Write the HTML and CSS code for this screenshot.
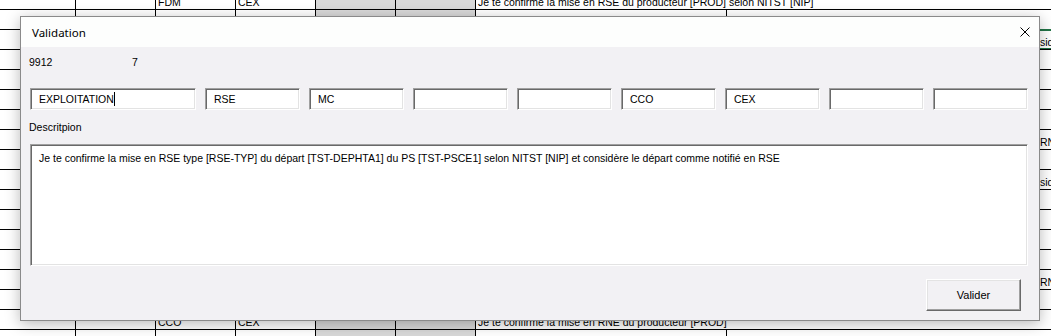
FILE: index.html
```html
<!DOCTYPE html>
<html lang="fr">
<head>
  <meta charset="UTF-8">
  <meta name="viewport" content="width=device-width, initial-scale=1">
  <title>Validation</title>
  <link rel="stylesheet" href="styles.css">
</head>
<body>

  <!-- feuille Excel en arriere-plan -->
  <div class="sheet">
    <div class="row">
      <div class="cell c0"></div><div class="cell c1"></div>
      <div class="cell c2">FDM</div><div class="cell c3">CEX</div>
      <div class="cell c4 grey"></div><div class="cell c5 grey"></div>
      <div class="cell c6 spill">Je te confirme la mise en RSE du producteur [PROD] selon NITST [NIP]</div>
      <div class="cell c7"></div><div class="cell c8"></div>
    </div>
    <div class="row">
      <div class="cell c0"></div><div class="cell c1"></div>
      <div class="cell c2">CEX</div><div class="cell c3">CCO</div>
      <div class="cell c4 grey"></div><div class="cell c5 grey"></div>
      <div class="cell c6"></div><div class="cell c7"></div><div class="cell c8"></div>
    </div>
    <div class="row">
      <div class="cell c0"></div><div class="cell c1"></div><div class="cell c2"></div><div class="cell c3"></div>
      <div class="cell c4 grey"></div><div class="cell c5 grey"></div>
      <div class="cell c6"></div><div class="cell c7"></div><div class="cell c8 selected">sidère le départ</div>
    </div>
    <div class="row">
      <div class="cell c0"></div><div class="cell c1"></div><div class="cell c2"></div><div class="cell c3"></div>
      <div class="cell c4 grey"></div><div class="cell c5 grey"></div>
      <div class="cell c6"></div><div class="cell c7"></div><div class="cell c8"></div>
    </div>
    <div class="row">
      <div class="cell c0"></div><div class="cell c1"></div><div class="cell c2"></div><div class="cell c3"></div>
      <div class="cell c4 grey"></div><div class="cell c5 grey"></div>
      <div class="cell c6"></div><div class="cell c7"></div><div class="cell c8"></div>
    </div>
    <div class="row">
      <div class="cell c0"></div><div class="cell c1"></div><div class="cell c2"></div><div class="cell c3"></div>
      <div class="cell c4 grey"></div><div class="cell c5 grey"></div>
      <div class="cell c6"></div><div class="cell c7"></div><div class="cell c8"></div>
    </div>
    <div class="row">
      <div class="cell c0"></div><div class="cell c1"></div><div class="cell c2"></div><div class="cell c3"></div>
      <div class="cell c4 grey"></div><div class="cell c5 grey"></div>
      <div class="cell c6"></div><div class="cell c7"></div><div class="cell c8"></div>
    </div>
    <div class="row">
      <div class="cell c0"></div><div class="cell c1"></div><div class="cell c2"></div><div class="cell c3"></div>
      <div class="cell c4 grey"></div><div class="cell c5 grey"></div>
      <div class="cell c6"></div><div class="cell c7"></div><div class="cell c8">RNE]</div>
    </div>
    <div class="row">
      <div class="cell c0"></div><div class="cell c1"></div><div class="cell c2"></div><div class="cell c3"></div>
      <div class="cell c4 grey"></div><div class="cell c5 grey"></div>
      <div class="cell c6"></div><div class="cell c7"></div><div class="cell c8"></div>
    </div>
    <div class="row">
      <div class="cell c0"></div><div class="cell c1"></div><div class="cell c2"></div><div class="cell c3"></div>
      <div class="cell c4 grey"></div><div class="cell c5 grey"></div>
      <div class="cell c6"></div><div class="cell c7"></div><div class="cell c8">sidère le départ</div>
    </div>
    <div class="row">
      <div class="cell c0"></div><div class="cell c1"></div><div class="cell c2"></div><div class="cell c3"></div>
      <div class="cell c4 grey"></div><div class="cell c5 grey"></div>
      <div class="cell c6"></div><div class="cell c7"></div><div class="cell c8"></div>
    </div>
    <div class="row">
      <div class="cell c0"></div><div class="cell c1"></div><div class="cell c2"></div><div class="cell c3"></div>
      <div class="cell c4 grey"></div><div class="cell c5 grey"></div>
      <div class="cell c6"></div><div class="cell c7"></div><div class="cell c8"></div>
    </div>
    <div class="row">
      <div class="cell c0"></div><div class="cell c1"></div><div class="cell c2"></div><div class="cell c3"></div>
      <div class="cell c4 grey"></div><div class="cell c5 grey"></div>
      <div class="cell c6"></div><div class="cell c7"></div><div class="cell c8"></div>
    </div>
    <div class="row">
      <div class="cell c0"></div><div class="cell c1"></div><div class="cell c2"></div><div class="cell c3"></div>
      <div class="cell c4 grey"></div><div class="cell c5 grey"></div>
      <div class="cell c6"></div><div class="cell c7"></div><div class="cell c8"></div>
    </div>
    <div class="row">
      <div class="cell c0"></div><div class="cell c1"></div><div class="cell c2"></div><div class="cell c3"></div>
      <div class="cell c4 grey"></div><div class="cell c5 grey"></div>
      <div class="cell c6"></div><div class="cell c7"></div><div class="cell c8">RNE]</div>
    </div>
    <div class="row">
      <div class="cell c0"></div><div class="cell c1"></div><div class="cell c2"></div><div class="cell c3"></div>
      <div class="cell c4 grey"></div><div class="cell c5 grey"></div>
      <div class="cell c6"></div><div class="cell c7"></div><div class="cell c8"></div>
    </div>
    <div class="row">
      <div class="cell c0"></div><div class="cell c1"></div>
      <div class="cell c2">CCO</div><div class="cell c3">CEX</div>
      <div class="cell c4 grey"></div><div class="cell c5 grey"></div>
      <div class="cell c6 spill">Je te confirme la mise en RNE du producteur [PROD]</div>
      <div class="cell c7"></div><div class="cell c8"></div>
    </div>
    <div class="row">
      <div class="cell c0"></div><div class="cell c1"></div><div class="cell c2"></div><div class="cell c3"></div>
      <div class="cell c4 grey"></div><div class="cell c5 grey"></div>
      <div class="cell c6"></div><div class="cell c7"></div><div class="cell c8"></div>
    </div>
  </div>

  <!-- UserForm -->
  <div class="dialog">
    <div class="titlebar">
      <span class="title">Validation</span>
      <button class="close-btn">
        <svg width="10" height="10" viewBox="0 0 10 10" fill="none" stroke="#000" stroke-width="1">
          <path d="M0.5 0.5 L9.5 9.5" />
          <path d="M9.5 0.5 L0.5 9.5" />
        </svg>
      </button>
    </div>

    <div class="form-body">
      <div class="ids">
        <span class="id-label">9912</span>
        <span class="id-label">7</span>
      </div>

      <div class="fields">
        <div class="field wide">EXPLOITATION<span class="caret"></span></div>
        <div class="field">RSE</div>
        <div class="field">MC</div>
        <div class="field"></div>
        <div class="field"></div>
        <div class="field">CCO</div>
        <div class="field">CEX</div>
        <div class="field"></div>
        <div class="field"></div>
      </div>

      <div class="desc-label">Descritpion</div>

      <div class="field memo">Je te confirme la mise en RSE type [RSE-TYP] du départ [TST-DEPHTA1] du PS [TST-PSCE1] selon NITST [NIP] et considère le départ comme notifié en RSE</div>

      <div class="actions">
        <button class="btn">Valider</button>
      </div>
    </div>
  </div>

</body>
</html>
```

FILE: styles.css
```css
body {
  margin: 0;
  padding: 0;
  background: #fff;
  font-family: "Liberation Sans", Arial, sans-serif;
  overflow: hidden;
}

/* ---- feuille ---- */
.sheet {
  margin-top: -10px;
  font-size: 10.5px;
  color: #000;
}

.row {
  display: flex;
  height: 20px;
}

.cell {
  flex: 0 0 auto;
  box-sizing: border-box;
  height: 20px;
  border-right: 1px solid #000;
  border-bottom: 1px solid #000;
  background: #fff;
  padding: 0 2px;
  display: flex;
  align-items: flex-end;
  line-height: 14px;
  white-space: nowrap;
}

.c0 { width: 76px; }
.c1, .c2, .c3, .c4, .c5 { width: 80px; }
.c6 { width: 251px; }
.c7 { width: 312px; border-right: none; }
.c8 { flex: 1 1 auto; border-right: none; padding-left: 1px; overflow: hidden; }

.grey { background: #d9d9d9; }

.spill {
  border-right: none;
  overflow: visible;
  position: relative;
  z-index: 1;
  background: transparent;
}

.selected {
  box-shadow: inset 0 1px 0 #217346, 0 -1px 0 #217346, inset 0 -1px 0 #217346, 0 1px 0 #217346;
}

/* ---- dialogue ---- */
.dialog {
  position: absolute;
  left: 20px;
  top: 16px;
  width: 1020px;
  height: 305px;
  box-sizing: border-box;
  border: 1px solid #8a8a8a;
  background: #f2f1f4;
  box-shadow: 0 3px 14px rgba(0, 0, 0, 0.28);
  z-index: 5;
  display: flex;
  flex-direction: column;
}

.titlebar {
  height: 30px;
  background: #fdfefd;
  display: flex;
  align-items: center;
  justify-content: space-between;
  padding: 0 9px 0 11px;
}

.title {
  font-family: "Noto Sans", sans-serif;
  font-size: 11.5px;
  color: #000;
}

.close-btn {
  border: none;
  background: none;
  padding: 0;
  width: 10px;
  height: 10px;
  display: flex;
}

.form-body {
  padding: 0 11px 0 9px;
  font-size: 10.5px;
  color: #000;
}

.ids {
  display: flex;
  margin-top: 8px;
  height: 14px;
  line-height: 14px;
}

.id-label {
  width: 104px;
  margin-left: -1px;
}

.fields {
  display: flex;
  gap: 9px;
  margin-top: 19px;
}

.field {
  box-sizing: border-box;
  width: 95px;
  height: 22px;
  background: #fff;
  border: 1px solid;
  border-color: #a0a0a0 #fff #fff #a0a0a0;
  box-shadow: inset 1px 1px 0 #696969, inset -1px -1px 0 #e3e3e3;
  padding: 0 8px;
  line-height: 20px;
  white-space: nowrap;
  overflow: hidden;
}

.field.wide {
  width: 166px;
}

.caret {
  display: inline-block;
  width: 1px;
  height: 14px;
  background: #000;
  vertical-align: -3px;
}

.desc-label {
  margin-top: 10px;
  height: 14px;
  line-height: 14px;
  margin-left: -1px;
}

.field.memo {
  width: 998px;
  height: 122px;
  margin-top: 10px;
  line-height: 14px;
  padding: 6px 8px;
  white-space: normal;
}

.actions {
  display: flex;
  justify-content: flex-end;
  margin-top: 13px;
  padding-right: 7px;
}

.btn {
  box-sizing: border-box;
  width: 95px;
  height: 32px;
  background: #f2f1f4;
  border: 1px solid;
  border-color: #fff #696969 #696969 #fff;
  box-shadow: inset -1px -1px 0 #a0a0a0, inset 1px 1px 0 #e3e3e3;
  font-family: "Liberation Sans", Arial, sans-serif;
  font-size: 11px;
  color: #000;
  padding: 0;
}
```
